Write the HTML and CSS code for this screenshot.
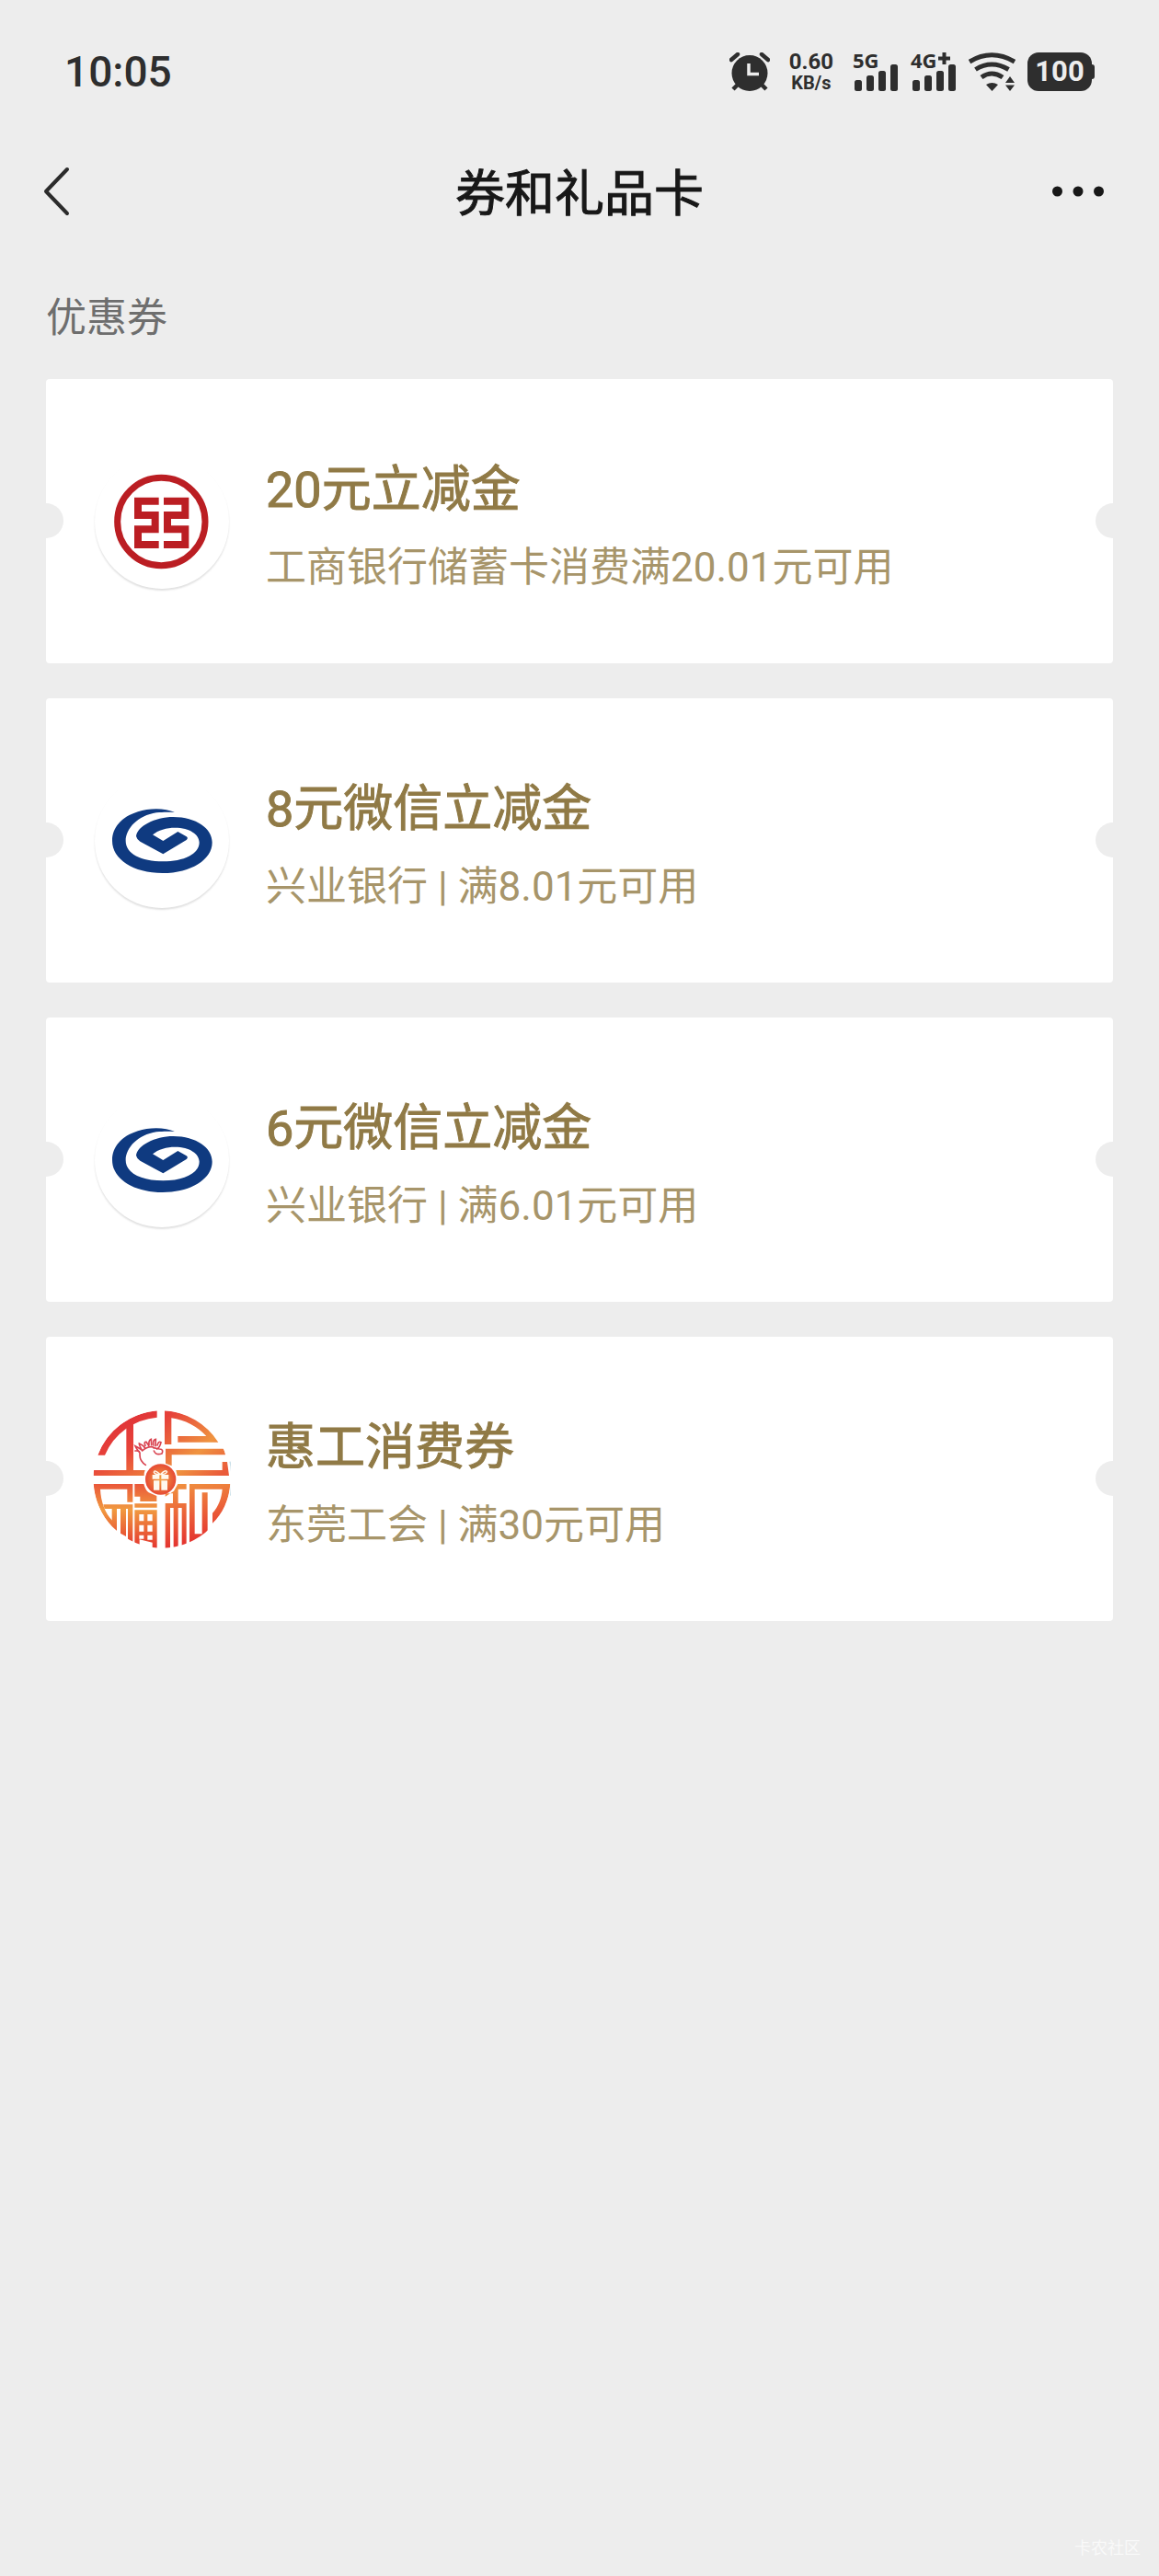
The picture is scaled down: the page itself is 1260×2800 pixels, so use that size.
FILE: index.html
```html
<!DOCTYPE html>
<html lang="zh-CN">
<head>
<meta charset="utf-8">
<meta name="viewport" content="width=device-width, initial-scale=1">
<title>券和礼品卡</title>
<link rel="stylesheet" href="styles.css">
</head>
<body>
<svg class="defs" width="0" height="0" aria-hidden="true">
  <defs>
    <symbol id="cib" viewBox="39 1 438 438">
      <path fill="#0f3a80" d="M300 127C270 112 215 112 180 125C125 142 96 178 96 220C96 280 165 325 260 325C355 325 422 280 422 225C422 180 370 142 295 142C235 142 178 172 174 205Q176 215 187 222L262 263L338 217Q345 211 338 206L310 190L262 220L228 200C245 185 275 177 300 177C350 177 380 200 380 225C380 262 330 287 262 287C190 287 140 262 140 220C140 180 180 137 240 128C265 125 285 126 300 127Z"/>
    </symbol>
  </defs>
</svg>
<div class="page">
  <div class="status">
    <time class="clock">10:05</time>
    <div class="indicators">
      <svg width="44" height="42" viewBox="0 0 44 42" role="img" aria-label="闹钟">
        <circle cx="22" cy="22.500" r="19.500" fill="#2e2e2e"/>
        <path d="M2 8L9 2M42 8L35 2" stroke="#2e2e2e" stroke-width="4.500" stroke-linecap="round"/>
        <path d="M9 35L4 40M35 35L40 40" stroke="#2e2e2e" stroke-width="4.500"/>
        <path d="M21 12V23.500H32" fill="none" stroke="#ededed" stroke-width="3.500"/>
      </svg>
      <div class="speed"><span class="speed-value">0.60</span><span class="speed-unit">KB/s</span></div>
      <svg class="signal" width="50" height="42" viewBox="0 0 50 42" role="img" aria-label="5G 信号">
        <g fill="#2e2e2e">
          <text class="net" x="0" y="17">5G</text>
          <rect x="2" y="30" width="8" height="12" rx="2.500"/><rect x="15" y="25" width="8" height="17" rx="2.500"/><rect x="28" y="20" width="8" height="22" rx="2.500"/><rect x="41" y="13" width="8" height="29" rx="2.500"/>
        </g>
      </svg>
      <svg class="signal" width="50" height="42" viewBox="0 0 50 42" role="img" aria-label="4G+ 信号">
        <g fill="#2e2e2e">
          <text class="net" x="0" y="17">4G</text>
          <path d="M34.500 0H38.500V4.500H43V8.500H38.500V13H34.500V8.500H30V4.500H34.500Z"/>
          <rect x="2" y="30" width="8" height="12" rx="2.500"/><rect x="15" y="25" width="8" height="17" rx="2.500"/><rect x="28" y="20" width="8" height="22" rx="2.500"/><rect x="41" y="13" width="8" height="29" rx="2.500"/>
        </g>
      </svg>
      <svg width="51" height="42" viewBox="0 0 51 42" role="img" aria-label="无线网络">
        <g fill="none" stroke="#2e2e2e" stroke-width="5">
          <path d="M1 10Q25 -4.500 50 10"/><path d="M7.500 18.500Q25 7.500 43.500 18.500"/><path d="M14 27Q25 19 37 27"/>
        </g>
        <path fill="#2e2e2e" d="M19 35Q25.500 31 32 35L25.500 42ZM45 26L50 33H40ZM40 35.500H50L45 42Z"/>
      </svg>
      <div class="battery">100</div>
    </div>
  </div>

  <header class="nav">
    <button class="nav-btn" type="button" aria-label="返回">
      <svg width="30" height="54" viewBox="0 0 30 54"><path d="M27 3L4 27L27 51" fill="none" stroke="#2b2b2b" stroke-width="4" stroke-linecap="round" stroke-linejoin="round"/></svg>
    </button>
    <h1 class="nav-title">券和礼品卡</h1>
    <button class="nav-btn" type="button" aria-label="更多">
      <svg width="56" height="12" viewBox="0 0 56 12" fill="#181818"><circle cx="5.500" cy="6" r="5.500"/><circle cx="28" cy="6" r="5.500"/><circle cx="50.500" cy="6" r="5.500"/></svg>
    </button>
  </header>

  <main class="coupons">
    <h2 class="section-title">优惠券</h2>
    <ul class="list">
      <li><a class="card" href="#">
        <span class="logo"><svg class="badge" viewBox="39 10 438 438" aria-hidden="true">
          <g fill="none" stroke="#bb1e23"><circle cx="256" cy="229" r="143" stroke-width="21"/><path stroke-width="24" d="M248 162H180V208H236V254H180V304H248M264 162H334V208H276V254H334V304H264"/></g>
        </svg></span>
        <span class="info"><strong class="name">20元立减金</strong><span class="desc">工商银行储蓄卡消费满20.01元可用</span></span>
      </a></li>
      <li><a class="card" href="#">
        <span class="logo"><svg class="badge" aria-hidden="true"><use href="#cib"/></svg></span>
        <span class="info"><strong class="name">8元微信立减金</strong><span class="desc">兴业银行 | 满8.01元可用</span></span>
      </a></li>
      <li><a class="card" href="#">
        <span class="logo"><svg class="badge" aria-hidden="true"><use href="#cib"/></svg></span>
        <span class="info"><strong class="name">6元微信立减金</strong><span class="desc">兴业银行 | 满6.01元可用</span></span>
      </a></li>
      <li><a class="card" href="#">
        <span class="logo"><svg class="emblem" viewBox="28 37 450 450" aria-hidden="true">
          <defs>
            <linearGradient id="gTop" gradientUnits="userSpaceOnUse" x1="110" y1="70" x2="200" y2="260"><stop offset="0" stop-color="#e03438"/><stop offset=".5" stop-color="#e8443a"/><stop offset="1" stop-color="#ee7f3c"/></linearGradient>
            <linearGradient id="gRight" gradientUnits="userSpaceOnUse" x1="265" y1="60" x2="440" y2="250"><stop offset="0" stop-color="#e6403a"/><stop offset=".6" stop-color="#ef9440"/><stop offset="1" stop-color="#ea5b3a"/></linearGradient>
            <linearGradient id="gLow" gradientUnits="userSpaceOnUse" x1="0" y1="277" x2="0" y2="487"><stop offset="0" stop-color="#ea573a"/><stop offset=".4" stop-color="#f19a40"/><stop offset="1" stop-color="#e4352f"/></linearGradient>
            <linearGradient id="gLow2" gradientUnits="userSpaceOnUse" x1="300" y1="277" x2="350" y2="487"><stop offset="0" stop-color="#f0913f"/><stop offset=".4" stop-color="#ec6a3a"/><stop offset="1" stop-color="#e32b2e"/></linearGradient>
            <radialGradient id="gMid"><stop offset="0" stop-color="#f2a541"/><stop offset="1" stop-color="#e64a34"/></radialGradient>
            <clipPath id="round"><circle cx="253" cy="262" r="224"/></clipPath>
          </defs>
          <g clip-path="url(#round)">
            <g fill="url(#gTop)">
              <path d="M44 183A224 224 0 0 1 237 38V60A204 204 0 0 0 67 183Z"/>
              <path d="M137 88L160 76V232H198Q194 242 195 250H30V232H137Z"/>
            </g>
            <g fill="url(#gRight)">
              <path d="M262 38A224 224 0 0 1 437 141H305V121H398A200 200 0 0 0 284 62V148H262Z"/>
              <path d="M265 162H455L460 182H285V218L265 210Z"/>
              <path d="M299 232H450V205H466L472 250H303Z"/>
            </g>
            <g fill="url(#gLow)">
              <path d="M30 277H158V336H140V294H52C54 335 68 372 92 397V418C55 380 34 330 30 277Z"/>
              <path d="M62 344H158V466L142 458V358H136V448L118 438V358H106V430L90 416V358H66Z"/>
              <path d="M164 277H194Q199 297 210 305L236 316V334H182V318H164Z"/>
              <path fill-rule="evenodd" d="M164 341H237V354H164ZM164 362H237V490L222 486V468L180 458V478L164 470ZM179 376V398H194V376ZM206 376V398H222V376ZM179 411V432H194V411ZM206 411V432H222V411ZM179 444V456H194V444ZM206 444V459H222V444Z"/>
            </g>
            <g fill="url(#gLow2)">
              <path d="M305 277H333V294H306V340H333V475L318 480V355H306V490H291V355H280V490H264V340H289V308H264V318L292 300Z"/>
              <path d="M343 277H476C472 330 450 375 418 405V372C438 350 448 322 450 294H360V440H384V305H402V432Q385 450 360 464L343 470Z"/>
            </g>
          </g>
          <circle cx="249" cy="262" r="50" fill="url(#gMid)"/>
          <path fill="#fff8ee" d="M222 247H245V261H222ZM251 247H275V261H251ZM226 266H245V297H226ZM251 266H271V297H251Z"/>
          <path d="M248 246Q228 228 227 239Q232 248 248 246Q266 228 270 238Q264 247 248 246" fill="none" stroke="#fff8ee" stroke-width="4"/>
          <path d="M200 215Q181 202 181 183Q184 166 166 169M181 176Q169 161 166 153Q184 162 189 168Q178 150 179 145Q193 151 198 160M189 169Q208 152 225 157M199 152Q193 139 202 140L210 152M211 150Q209 134 218 131L219 150M225 151Q223 132 233 131L232 153M238 151Q242 136 250 141Q247 157 237 163M227 169Q234 185 253 178Q260 164 245 163L225 159" fill="none" stroke="#d94350" stroke-width="5" stroke-linecap="round"/>
          <path d="M475 204Q485 242 477 315" fill="none" stroke="#c9dfe8" stroke-width="4"/>
        </svg></span>
        <span class="info"><strong class="name">惠工消费券</strong><span class="desc">东莞工会 | 满30元可用</span></span>
      </a></li>
    </ul>
  </main>
  <footer class="watermark">卡农社区</footer>
</div>
</body>
</html>
```

FILE: styles.css
```css
* { box-sizing: border-box; }

body {
  margin: 0;
  background: #ededed;
  color: #181818;
  font-family: Roboto, "Noto Sans CJK SC", sans-serif;
}

.defs { position: absolute; }

svg { display: block; flex: none; }

.page {
  display: flex;
  flex-direction: column;
  min-height: 100vh;
}

/* status bar */
.status {
  display: flex;
  justify-content: space-between;
  align-items: center;
  height: 156px;
  padding: 0 70px;
  color: #2e2e2e;
}

.clock { font-size: 46px; font-weight: 500; line-height: 54px; }

.indicators { display: flex; align-items: center; gap: 13px; }

.speed {
  display: flex;
  flex-direction: column;
  align-items: center;
  padding: 0 8px;
  font-weight: 700;
}

.speed-value { font-size: 24px; line-height: 24px; }
.speed-unit { font-size: 20px; line-height: 22px; }

.signal { overflow: visible; }

.net { font: 700 22px "Noto Sans", sans-serif; }

.battery {
  position: relative;
  width: 70px;
  margin-right: 3px;
  border-radius: 12px;
  background: #2e2e2e;
  color: #ededed;
  font-size: 31px;
  font-weight: 700;
  line-height: 42px;
  text-align: center;
}

.battery::after {
  content: "";
  position: absolute;
  top: 13px;
  right: -3px;
  width: 4px;
  height: 16px;
  border-radius: 0 3px 3px 0;
  background: #2e2e2e;
}

/* title bar */
.nav {
  display: flex;
  justify-content: space-between;
  align-items: center;
  height: 104px;
  padding: 0 60px 0 46px;
}

.nav-btn {
  display: flex;
  flex: 1;
  align-items: center;
  padding: 0;
  border: 0;
  background: none;
}

.nav-btn:last-child { justify-content: flex-end; }

.nav-title {
  margin: 0;
  padding: 8px 0 0 14px;
  font-size: 54px;
  font-weight: 400;
  line-height: 64px;
  -webkit-text-stroke: 1px currentColor;
}

/* coupon list */
.coupons { padding: 56px 50px 0; }

.section-title {
  margin: 0 0 36px;
  color: #6e6e6e;
  font-size: 44px;
  font-weight: 400;
  line-height: 60px;
}

.list {
  display: flex;
  flex-direction: column;
  gap: 38px;
  margin: 0;
  padding: 0;
  list-style: none;
}

.card {
  position: relative;
  display: flex;
  align-items: center;
  gap: 38px;
  min-height: 309px;
  padding: 0 51px;
  overflow: hidden;
  border-radius: 4px;
  background: #fff;
  text-decoration: none;
}

.card::before,
.card::after {
  content: "";
  position: absolute;
  top: 50%;
  width: 38px;
  height: 38px;
  margin-top: -20px;
  border-radius: 50%;
  background: #ededed;
}

.card::before { left: -19px; }
.card::after { right: -19px; }

.logo {
  display: flex;
  flex: none;
  justify-content: center;
  width: 150px;
}

.badge {
  width: 146px;
  height: 146px;
  border-radius: 50%;
  box-shadow: 0 2px 2px rgba(0, 0, 0, 0.12);
}

.emblem { width: 150px; height: 150px; }

.info { display: flex; flex-direction: column; gap: 12px; }

.name {
  color: #907a46;
  font-size: 54px;
  font-weight: 400;
  line-height: 88px;
  -webkit-text-stroke: 1px currentColor;
}

.desc {
  color: #a7956a;
  font-size: 44px;
  line-height: 56px;
}

.watermark {
  margin-top: auto;
  padding: 0 20px 18px;
  color: #f9f9f9;
  font-size: 18px;
  line-height: 24px;
  text-align: right;
}
```
